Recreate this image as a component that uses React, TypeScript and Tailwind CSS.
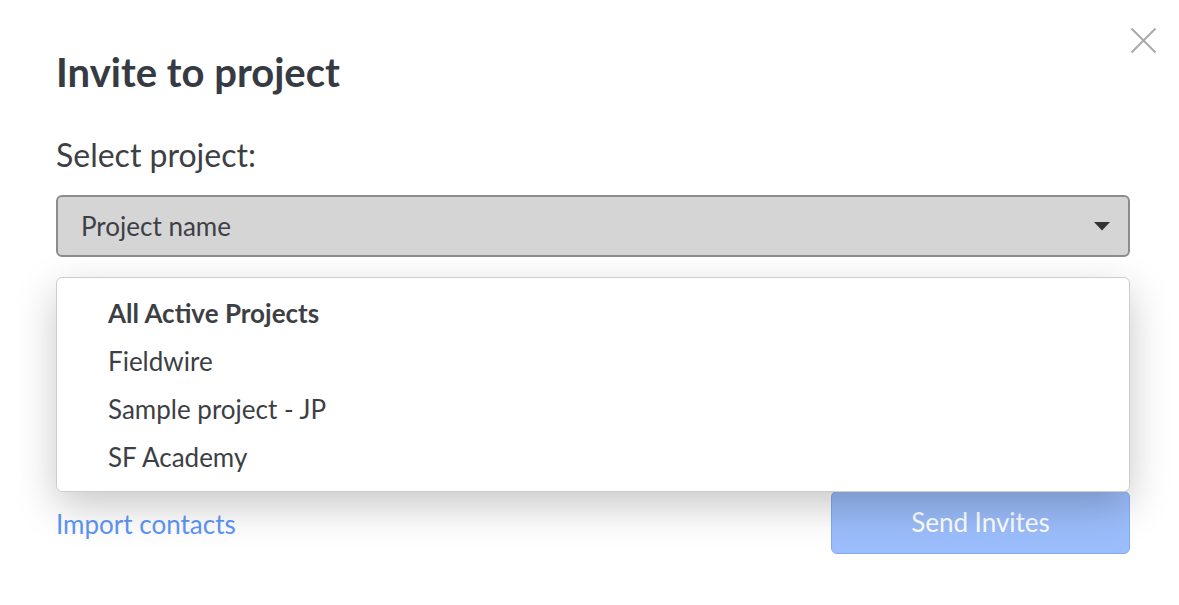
import { useState } from "react";

const projects = [
  { name: "All Active Projects", bold: true },
  { name: "Fieldwire" },
  { name: "Sample project - JP" },
  { name: "SF Academy" },
];

export default function App() {
  const [isOpen, setIsOpen] = useState(true);

  return (
    <div
      className="relative w-[1179px] h-[605px] bg-white overflow-hidden text-[#3d3f45]"
      style={{ fontFamily: "Lato, 'Open Sans', sans-serif" }}
    >
      {/* Close */}
      <button className="absolute top-[27px] right-[22px] w-[27px] h-[27px] text-[#a9a9a9]">
        <svg viewBox="0 0 27 27" width="27" height="27" fill="none" stroke="currentColor" strokeWidth="2">
          <path d="M1.5 1.5 L25.5 25.5 M25.5 1.5 L1.5 25.5" />
        </svg>
      </button>

      <div className="pl-[56px] pr-[49px] pt-[48px]">
        <h1 className="text-[40px] leading-[48px] font-bold text-[#363a43]">Invite to project</h1>

        <div className="mt-[40px] text-[32px] leading-[38px] text-[#3d3f45]">Select project:</div>

        {/* Select */}
        <div className="relative mt-[21px]">
          <button
            onClick={() => setIsOpen(!isOpen)}
            className="w-full h-[62px] flex items-center justify-between pl-[23px] pr-[18px] bg-[#d5d5d5] border-2 border-[#8c8c8c] rounded-[6px] text-[26px] text-[#3d3f45]"
          >
            <span>Project name</span>
            <svg width="16" height="9" viewBox="0 0 16 9">
              <path d="M0 0 H16 L8 8.5 Z" fill="#333" />
            </svg>
          </button>

          {/* field behind the open menu */}
          <div className="mt-[48px] h-[31px]" />
          <div className="mt-[28px] h-[65px] border-2 border-[#8c8c8c] rounded-[6px]" />

          {/* Dropdown */}
          {isOpen && (
            <div className="absolute left-0 right-0 top-[82px] z-10 bg-white border border-[#cdcdcd] rounded-[6px] pt-[11px] pb-[10px] shadow-[0_14px_40px_rgba(0,0,0,0.22)]">
              {projects.map((p) => (
                <div
                  key={p.name}
                  className={`h-[48px] flex items-center pl-[51px] text-[26px] text-[#3d3f45] cursor-pointer ${p.bold ? "font-bold" : ""}`}
                >
                  {p.name}
                </div>
              ))}
            </div>
          )}
        </div>

        {/* Footer */}
        <div className="mt-[62px] flex items-center justify-between">
          <a className="text-[26px] leading-[31px] mt-[3px] text-[#5d96f8] cursor-pointer">Import contacts</a>
          <button className="w-[299px] h-[63px] rounded-[6px] bg-[#9bbdfb] border border-[#85a9f2] text-white text-[26px]">
            Send Invites
          </button>
        </div>
      </div>
    </div>
  );
}
